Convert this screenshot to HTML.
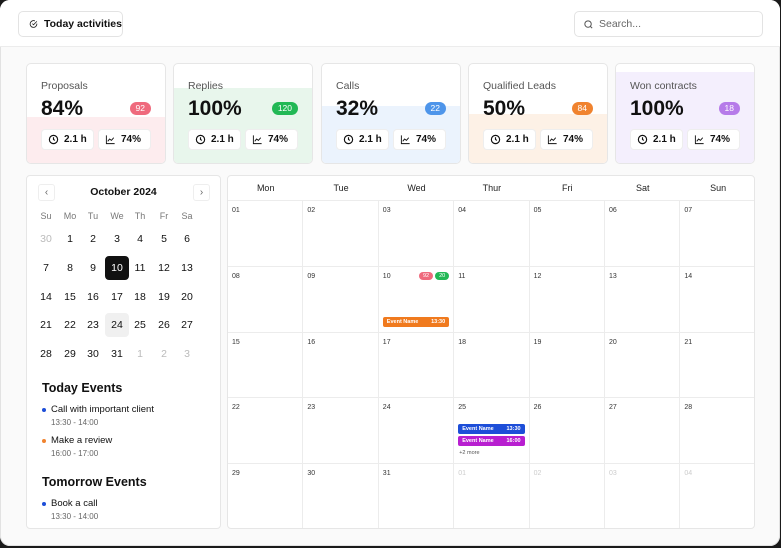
<!DOCTYPE html>
<html><head><meta charset="utf-8"><style>
*{box-sizing:border-box;margin:0;padding:0}
body{width:781px;height:548px;background:#1a1a1a;font-family:"Liberation Sans",sans-serif;color:#111;position:relative;overflow:hidden}
.frame{position:absolute;left:0;top:0;width:780px;height:546px;background:#fafafa;border-radius:10px;box-shadow:inset 0 0 0 1px #e2e2e2;overflow:hidden}
.hdr{position:absolute;left:0;top:0;right:0;height:47px;background:#fff;border-bottom:1px solid #ececec}
.btn{position:absolute;left:18px;top:11px;width:105px;height:26px;border:1px solid #e3e3e3;border-radius:5px;background:#fff;font-size:10.5px;font-weight:bold;display:flex;align-items:center;padding-left:10px;gap:6px;white-space:nowrap}
.search{position:absolute;left:574px;top:11px;width:189px;height:26px;border:1px solid #e3e3e3;border-radius:5px;background:#fff;font-size:10.5px;color:#666;display:flex;align-items:center;padding-left:8px;gap:5px}
.card{position:absolute;top:63px;width:140px;height:101px;background:#fff;border:1px solid #e6e6e6;border-radius:5px;overflow:hidden}
.fill{position:absolute;left:0;right:0;bottom:0}
.card .t{position:absolute;left:14px;top:16px;font-size:10.5px;color:#555}
.card .v{position:absolute;left:14px;top:33px;font-size:21px;font-weight:bold;color:#111}
.card .b{position:absolute;right:14px;top:38px;height:13px;padding:0 6px;border-radius:7px;font-size:8.5px;color:#fff;line-height:13px}
.pill{position:absolute;top:66px;width:51px;height:19px;background:#fff;border-radius:3px;font-size:10px;font-weight:bold;display:flex;align-items:center;gap:5px;padding-left:6px;box-shadow:0 0 0 1px #eee}
.left{position:absolute;left:26px;top:175px;width:195px;height:354px;background:#fff;border:1px solid #e6e6e6;border-radius:4px}
.nav{position:absolute;top:8px;width:17px;height:17px;border:1px solid #eee;border-radius:3px;font-size:10px;color:#666;text-align:center;line-height:15px}
.d{position:absolute;width:24px;height:24px;margin-left:-12px;margin-top:-12px;text-align:center;line-height:24px;font-size:10.5px;border-radius:4px}
.cal{position:absolute;left:227px;top:175px;width:528px;height:354px;background:#fff;border:1px solid #e6e6e6;border-radius:4px;overflow:hidden}
.wd{position:absolute;top:0;height:25px;line-height:25px;text-align:center;font-size:9px;color:#222;width:75.4px}
.cell{position:absolute;width:75.4px;height:65.8px;border-left:1px solid #ececec;border-top:1px solid #ececec;font-size:7px;color:#333;padding:6px 0 0 4px}
.ev{position:absolute;left:4px;right:4px;height:10px;border-radius:2px;color:#fff;font-size:5.5px;font-weight:bold;line-height:10px;padding:0 4px;display:flex;justify-content:space-between}
.h{position:absolute;left:15px;font-size:12.5px;font-weight:bold}
.it{position:absolute;left:24px;font-size:9.5px;font-weight:500}
.tm{position:absolute;left:24px;font-size:8px;color:#666}
.dot{position:absolute;left:15px;width:4px;height:4px;border-radius:2px}
</style></head><body><div class="frame">
<div class="hdr">
<div class="btn"><svg width="12" height="12" viewBox="0 0 24 24" fill="none" stroke="#222" stroke-width="2.3"><path d="M21 11v1a9 9 0 1 1-5.3-8.2"/><path d="M9 11l3 3 9-9"/></svg>Today activities</div>
<div class="search"><svg width="11" height="11" viewBox="0 0 24 24" fill="none" stroke="#555" stroke-width="2.2"><circle cx="11" cy="11" r="7"/><path d="M20 20l-4-4"/></svg>Search...</div>
</div>

<div class="card" style="left:26px"><div class="fill" style="top:53px;background:#fdecee"></div><div class="t">Proposals</div><div class="v">84%</div><div class="b" style="background:#ef6a7d">92</div>
<div class="pill" style="left:15px"><svg width="11" height="11" viewBox="0 0 24 24" fill="none" stroke="#111" stroke-width="2.5"><circle cx="12" cy="12" r="9"/><path d="M12 7v5l3 2"/></svg>2.1 h</div>
<div class="pill" style="left:72px"><svg width="11" height="11" viewBox="0 0 24 24" fill="none" stroke="#111" stroke-width="2"><path d="M3 3v18h18M6 16l4-5 4 3 5-6"/></svg>74%</div></div>

<div class="card" style="left:173px"><div class="fill" style="top:24px;background:#e8f6ec"></div><div class="t">Replies</div><div class="v">100%</div><div class="b" style="background:#22b855">120</div>
<div class="pill" style="left:15px"><svg width="11" height="11" viewBox="0 0 24 24" fill="none" stroke="#111" stroke-width="2.5"><circle cx="12" cy="12" r="9"/><path d="M12 7v5l3 2"/></svg>2.1 h</div>
<div class="pill" style="left:72px"><svg width="11" height="11" viewBox="0 0 24 24" fill="none" stroke="#111" stroke-width="2"><path d="M3 3v18h18M6 16l4-5 4 3 5-6"/></svg>74%</div></div>

<div class="card" style="left:321px"><div class="fill" style="top:42px;background:#ebf3fd"></div><div class="t">Calls</div><div class="v">32%</div><div class="b" style="background:#4e95ea">22</div>
<div class="pill" style="left:15px"><svg width="11" height="11" viewBox="0 0 24 24" fill="none" stroke="#111" stroke-width="2.5"><circle cx="12" cy="12" r="9"/><path d="M12 7v5l3 2"/></svg>2.1 h</div>
<div class="pill" style="left:72px"><svg width="11" height="11" viewBox="0 0 24 24" fill="none" stroke="#111" stroke-width="2"><path d="M3 3v18h18M6 16l4-5 4 3 5-6"/></svg>74%</div></div>

<div class="card" style="left:468px"><div class="fill" style="top:50px;background:#fdf1e6"></div><div class="t">Qualified Leads</div><div class="v">50%</div><div class="b" style="background:#f0832f">84</div>
<div class="pill" style="left:15px"><svg width="11" height="11" viewBox="0 0 24 24" fill="none" stroke="#111" stroke-width="2.5"><circle cx="12" cy="12" r="9"/><path d="M12 7v5l3 2"/></svg>2.1 h</div>
<div class="pill" style="left:72px"><svg width="11" height="11" viewBox="0 0 24 24" fill="none" stroke="#111" stroke-width="2"><path d="M3 3v18h18M6 16l4-5 4 3 5-6"/></svg>74%</div></div>

<div class="card" style="left:615px"><div class="fill" style="top:8px;background:#f4effd"></div><div class="t">Won contracts</div><div class="v">100%</div><div class="b" style="background:#b67be9">18</div>
<div class="pill" style="left:15px"><svg width="11" height="11" viewBox="0 0 24 24" fill="none" stroke="#111" stroke-width="2.5"><circle cx="12" cy="12" r="9"/><path d="M12 7v5l3 2"/></svg>2.1 h</div>
<div class="pill" style="left:72px"><svg width="11" height="11" viewBox="0 0 24 24" fill="none" stroke="#111" stroke-width="2"><path d="M3 3v18h18M6 16l4-5 4 3 5-6"/></svg>74%</div></div>

<div class="left">
<div class="nav" style="left:11px">‹</div><div class="nav" style="left:166px">›</div>
<div style="position:absolute;left:0;right:0;top:10px;text-align:center;font-size:10.5px;font-weight:bold">October 2024</div>
<div id="mini"></div>
<div class="h" style="top:205px">Today Events</div>
<div class="dot" style="top:232px;background:#1d4ed8"></div><div class="it" style="top:228px">Call with important client</div><div class="tm" style="top:242px">13:30 - 14:00</div>
<div class="dot" style="top:263px;background:#f0832f"></div><div class="it" style="top:259px">Make a review</div><div class="tm" style="top:273px">16:00 - 17:00</div>
<div class="h" style="top:299px">Tomorrow Events</div>
<div class="dot" style="top:326px;background:#1d4ed8"></div><div class="it" style="top:322px">Book a call</div><div class="tm" style="top:336px">13:30 - 14:00</div>
</div>

<div class="cal" id="cal"></div>
</div>
<script>
var m=document.getElementById('mini'),h='';
var xs=[19,43,66,90,113,137,160],ys=[63,92,121,149,178];
['Su','Mo','Tu','We','Th','Fr','Sa'].forEach(function(w,i){h+='<div class="d" style="left:'+xs[i]+'px;top:40px;font-size:9px;color:#777">'+w+'</div>';});
var days=[30];for(var i=1;i<=31;i++)days.push(i);days.push(1,2,3);
days.forEach(function(d,k){var r=Math.floor(k/7),c=k%7,st='';
if(k==0||k>31)st='color:#bbb;';
if(d==10&&k<32&&k>0)st+='background:#111;color:#fff;';
if(d==24&&k<32)st+='background:#f0f0f0;';
h+='<div class="d" style="left:'+xs[c]+'px;top:'+ys[r]+'px;'+st+'">'+d+'</div>';});
m.innerHTML=h;
var c=document.getElementById('cal'),s='';
['Mon','Tue','Wed','Thur','Fri','Sat','Sun'].forEach(function(w,i){s+='<div class="wd" style="left:'+(i*75.4)+'px">'+w+'</div>';});
for(var k=0;k<35;k++){var r=Math.floor(k/7),cc=k%7,n=k+1,lab,st='';
if(n>31){lab='0'+(n-31);st='color:#ccc;';}else lab=(n<10?'0':'')+n;
var inner=lab;
if(n==10)inner+='<div style="position:absolute;right:4px;top:5px;display:flex;gap:2px"><span style="background:#ef6a7d;color:#fff;border-radius:5px;font-size:5.5px;padding:1px 4px">92</span><span style="background:#22b855;color:#fff;border-radius:5px;font-size:5.5px;padding:1px 4px">20</span></div><div class="ev" style="top:50px;background:#f07a1e"><span>Event Name</span><span>13:30</span></div>';
if(n==25)inner+='<div class="ev" style="top:26px;background:#1d4ed8"><span>Event Name</span><span>13:30</span></div><div class="ev" style="top:38px;background:#b81fd0"><span>Event Name</span><span>16:00</span></div><div style="position:absolute;left:5px;top:52px;font-size:5.5px;color:#555">+2 more</div>';
s+='<div class="cell" style="left:'+(cc*75.4-1)+'px;top:'+(24+r*65.8)+'px;'+st+'">'+inner+'</div>';}
c.innerHTML=s;
</script>
</body></html>
